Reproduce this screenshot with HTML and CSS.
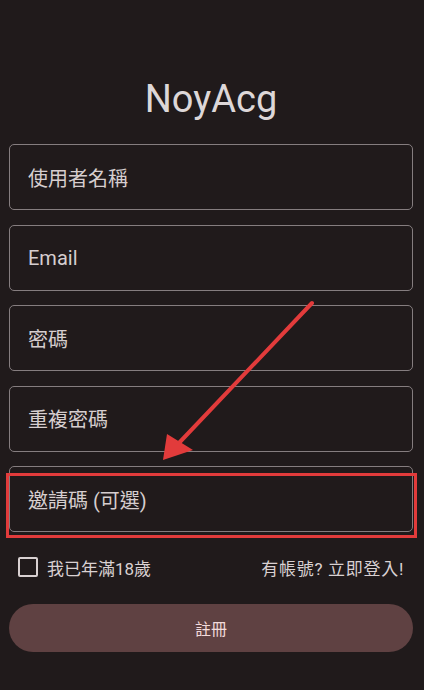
FILE: index.html
```html
<!DOCTYPE html>
<html lang="zh-Hant">
<head>
<meta charset="utf-8">
<title>NoyAcg 註冊</title>
<link rel="stylesheet" href="styles.css">
</head>
<body>
<main class="page">
  <h1 class="title">NoyAcg</h1>
  <form class="form">
    <div class="field"><span class="label">使用者名稱</span></div>
    <div class="field"><span class="label">Email</span></div>
    <div class="field"><span class="label">密碼</span></div>
    <div class="field"><span class="label">重複密碼</span></div>
    <div class="field"><span class="label">邀請碼 (可選)</span></div>
    <div class="row">
      <label class="check"><span class="box"></span><span class="check-text">我已年滿18歲</span></label>
      <span class="login">有帳號? 立即登入!</span>
    </div>
    <div class="button">註冊</div>
  </form>
</main>
<svg class="annot" width="424" height="690" viewBox="0 0 424 690" xmlns="http://www.w3.org/2000/svg">
  <rect x="7.5" y="474.5" width="408" height="62" fill="none" stroke="#e23b3b" stroke-width="3"/>
  <line x1="312" y1="303" x2="178" y2="444" stroke="#e23b3b" stroke-width="4" stroke-linecap="round"/>
  <polygon points="163,460 167,434 193,450" fill="#e23b3b"/>
</svg>
</body>
</html>
```
FILE: styles.css
```css
html, body {
  margin: 0;
  padding: 0;
  background: #201a1b;
}
body {
  width: 424px;
  height: 690px;
  overflow: hidden;
  position: relative;
  font-family: Roboto, "Noto Sans CJK TC", sans-serif;
  color: #ddd5d6;
}
.page {
  padding: 76px 11px 0 9px;
}
.title {
  margin: 0 0 22px;
  font-size: 38px;
  line-height: 46px;
  font-weight: 400;
  text-align: center;
  color: #ddd7d8;
}
.form {
  display: flex;
  flex-direction: column;
  gap: 14.5px;
}
.field {
  height: 66px;
  box-sizing: border-box;
  border: 1px solid #857d7f;
  border-radius: 5px;
  display: flex;
  align-items: center;
  padding-left: 18px;
}
.label {
  font-size: 20px;
  color: #d6cecf;
}
.row {
  height: 48px;
  margin-top: -3.5px;
  display: flex;
  align-items: center;
  justify-content: space-between;
  padding: 0 9px 0 9px;
}
.check {
  display: flex;
  align-items: center;
  gap: 9px;
}
.box {
  width: 20px;
  height: 20px;
  box-sizing: border-box;
  border: 2px solid #d8d0d1;
  border-radius: 2px;
}
.check-text, .login {
  font-size: 17px;
  color: #d9d1d2;
}
.login {
  letter-spacing: 0.7px;
}
.button {
  margin-top: -1.5px;
  height: 48px;
  border-radius: 24px;
  background: #5f4142;
  color: #f2dadb;
  font-size: 16px;
  display: flex;
  align-items: center;
  justify-content: center;
}
.annot {
  position: absolute;
  left: 0;
  top: 0;
  pointer-events: none;
}
```
